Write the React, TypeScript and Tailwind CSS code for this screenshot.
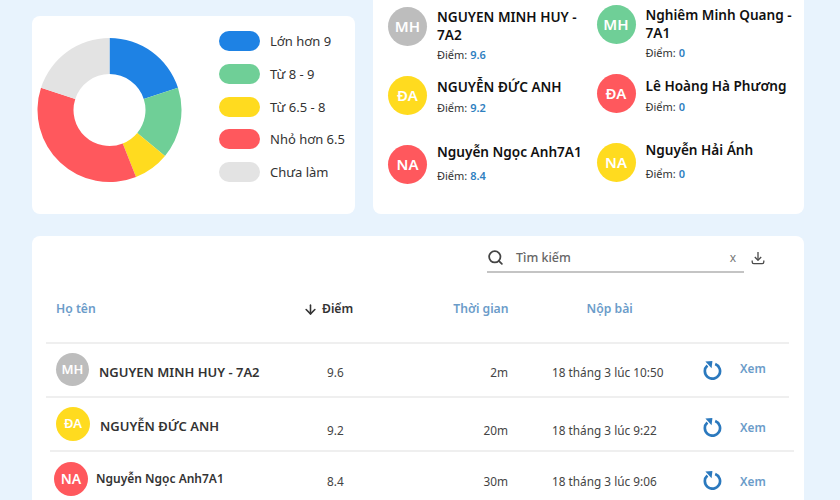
import React from 'react';
import { Search, ArrowDown } from 'lucide-react';

const BLUE = '#1e82e4';
const GREEN = '#6fcf97';
const YELLOW = '#ffdb1f';
const RED = '#ff585d';
const GRAY = '#e3e3e3';

const slices = [
  { color: BLUE, from: 0, to: 72 },
  { color: GREEN, from: 72, to: 129.6 },
  { color: YELLOW, from: 129.6, to: 158.4 },
  { color: RED, from: 158.4, to: 288 },
  { color: GRAY, from: 288, to: 360 },
];

const legend = [
  { color: 'bg-[#1e82e4]', label: 'Lớn hơn 9' },
  { color: 'bg-[#6fcf97]', label: 'Từ 8 - 9' },
  { color: 'bg-[#ffdb1f]', label: 'Từ 6.5 - 8' },
  { color: 'bg-[#ff585d]', label: 'Nhỏ hơn 6.5' },
  { color: 'bg-[#e3e3e3]', label: 'Chưa làm' },
];

function arcPath(from: number, to: number) {
  const R = 72;
  const r = 36;
  const pt = (rad: number, a: number) => {
    const t = (a * Math.PI) / 180;
    return `${(rad * Math.sin(t)).toFixed(2)} ${(-rad * Math.cos(t)).toFixed(2)}`;
  };
  const large = to - from > 180 ? 1 : 0;
  return `M${pt(R, from)} A${R} ${R} 0 ${large} 1 ${pt(R, to)} L${pt(r, to)} A${r} ${r} 0 ${large} 0 ${pt(r, from)} Z`;
}

const Donut = () => (
  <svg width="146" height="146" viewBox="-73.5 -73 146 146" className="shrink-0">
    {slices.map((s) => (
      <path key={s.color} d={arcPath(s.from, s.to)} fill={s.color} />
    ))}
  </svg>
);

const RefreshIcon = () => (
  <svg width="20" height="20" viewBox="0 0 20 20" fill="none" className="shrink-0">
    <path d="M4.4 5.4 A7.6 7.6 0 1 0 12.2 4" stroke="#2b79be" strokeWidth="2.7" />
    <path d="M2.4 1.4 L9.4 1 L8.6 8.2 Z" fill="#2b79be" />
  </svg>
);

const DownloadIcon = () => (
  <svg width="14" height="14" viewBox="0 0 14 14" fill="none" stroke="#4a4a4a" strokeWidth="1.3" className="shrink-0">
    <path d="M7 1 V9" />
    <path d="M3.8 6 L7 9.2 L10.2 6" strokeLinejoin="round" fill="none" />
    <path d="M1.2 9.5 V11 Q1.2 12.6 2.8 12.6 H11.2 Q12.8 12.6 12.8 11 V9.5" />
  </svg>
);

interface StudentProps {
  initials: string;
  color: string;
  name: React.ReactNode;
  score: string;
  className?: string;
  textClass: string;
  metaClass: string;
}

const Student: React.FC<StudentProps> = ({ initials, color, name, score, className, textClass, metaClass }) => (
  <div className={`flex gap-[10px] ${className ?? ''}`}>
    <div className={`w-[39px] h-[39px] rounded-full shrink-0 flex items-center justify-center text-white font-semibold text-[15px] ${color}`}>
      {initials}
    </div>
    <div className={textClass}>
      <div className="text-[13.6px] leading-[18px] font-semibold text-[#111]">{name}</div>
      <div className={`text-[11px] leading-[15px] text-[#333] ${metaClass}`}>
        Điểm: <span className="font-semibold text-[#2f80c0]">{score}</span>
      </div>
    </div>
  </div>
);

export default function App() {
  return (
    <div className="w-[840px] h-[500px] overflow-hidden bg-[#e8f3fd] font-['Noto_Sans','Open_Sans',sans-serif]">
      <div className="flex items-end gap-[18px] pl-[32px] h-[214px]">
        <div className="w-[323px] h-[198px] bg-white rounded-lg flex">
          <div className="ml-[4px] mt-[21px]">
            <Donut />
          </div>
          <div className="ml-[37px] mt-[15px] flex flex-col gap-[12.75px]">
            {legend.map((l) => (
              <div key={l.label} className="flex items-center gap-[10px] text-[13px] leading-[20px] text-[#333]">
                <span className={`w-[41px] h-[20px] rounded-[10px] ${l.color}`} />
                {l.label}
              </div>
            ))}
          </div>
        </div>
        <div className="w-[431px] h-[214px] bg-white rounded-b-lg flex">
          <div className="w-[209px] pl-[15px] pt-[7px] flex flex-col">
            <Student initials="MH" color="bg-[#bdbdbd]" name="NGUYEN MINH HUY - 7A2" score="9.6" textClass="pt-[1px]" metaClass="mt-[3px]" />
            <Student initials="ĐA" color="bg-[#ffdb1f]" name="NGUYỄN ĐỨC ANH" score="9.2" className="mt-[14px] h-[69px]" textClass="pt-[2px]" metaClass="mt-[4px]" />
            <Student initials="NA" color="bg-[#ff585d]" name="Nguyễn Ngọc Anh7A1" score="8.4" textClass="-mt-[2px]" metaClass="mt-[7px]" />
          </div>
          <div className="flex-1 pl-[14.5px] pt-[5px] pr-[10px] flex flex-col">
            <Student initials="MH" color="bg-[#6fcf97]" name="Nghiêm Minh Quang - 7A1" score="0" className="-mr-[2px]" textClass="pt-[1px]" metaClass="mt-[3px]" />
            <Student initials="ĐA" color="bg-[#ff585d]" name="Lê Hoàng Hà Phương" score="0" className="mt-[14px] h-[69px]" textClass="pt-[3px]" metaClass="mt-[4px]" />
            <Student initials="NA" color="bg-[#ffdb1f]" name="Nguyễn Hải Ánh" score="0" textClass="-mt-[2px]" metaClass="mt-[7px]" />
          </div>
        </div>
      </div>

      <div className="ml-[32px] mt-[22px] w-[772px] h-[300px] bg-white rounded-t-lg">
        <div className="flex items-center pt-[8px] pl-[455px]">
          <div className="w-[257px] h-[29px] border-b-2 border-[#c4c4c4] flex items-center">
            <Search size={17} color="#444" strokeWidth={2.5} className="shrink-0" />
            <span className="ml-[12px] mt-[1px] text-[12.5px] font-medium text-[#666]">Tìm kiếm</span>
            <span className="ml-auto mr-[8px] text-[12px] text-[#777]">x</span>
          </div>
          <div className="ml-[7px] -mt-[1px]">
            <DownloadIcon />
          </div>
        </div>

        <div className="flex items-center h-[35px] mt-[19px] text-[12.2px] font-semibold text-[#6b9cc9]">
          <span className="ml-[24px] w-[247px]">Họ tên</span>
          <span className="flex items-center text-[#333]">
            <ArrowDown size={15} color="#333" strokeWidth={2.5} />
            <span className="ml-[4px]">Điểm</span>
          </span>
          <span className="ml-[100px]">Thời gian</span>
          <span className="ml-[78px]">Nộp bài</span>
        </div>

        <div className="mt-[15px] ml-[14px] w-[743px] border-t-2 border-[#efefef] h-[54px] flex items-center text-[11.8px] text-[#444]">
          <div className="w-[33px] h-[33px] ml-[10px] rounded-full bg-[#bdbdbd] shrink-0 flex items-center justify-center text-white font-semibold text-[13px] -mt-[1px]">MH</div>
          <span className="ml-[10px] w-[228px] text-[13px] font-semibold text-[#333] mt-[6px]">NGUYEN MINH HUY - 7A2</span>
          <span className="w-[40px] mt-[6px]">9.6</span>
          <span className="w-[141px] text-right mt-[6px]">2m</span>
          <span className="ml-[44px] w-[151px] mt-[6px]">18 tháng 3 lúc 10:50</span>
          <RefreshIcon />
          <span className="ml-[17px] font-semibold text-[#6b9cc9] -mt-[2px]">Xem</span>
        </div>
        <div className="ml-[14px] w-[743px] border-t-2 border-[#efefef] h-[54px] flex items-center text-[11.8px] text-[#444]">
          <div className="w-[34px] h-[34px] ml-[10px] rounded-full bg-[#ffdb1f] shrink-0 flex items-center justify-center text-white font-semibold text-[13px] -mt-[1px]">ĐA</div>
          <span className="ml-[10px] w-[227px] text-[13px] font-semibold text-[#333] mt-[6px]">NGUYỄN ĐỨC ANH</span>
          <span className="w-[40px] mt-[14px]">9.2</span>
          <span className="w-[141px] text-right mt-[14px]">20m</span>
          <span className="ml-[44px] w-[151px] mt-[14px]">18 tháng 3 lúc 9:22</span>
          <div className="mt-[6px]">
            <RefreshIcon />
          </div>
          <span className="ml-[17px] font-semibold text-[#6b9cc9] mt-[8px]">Xem</span>
        </div>
        <div className="ml-[18px] w-[744px] border-t-2 border-[#efefef] h-[54px] flex items-center text-[11.8px] text-[#444]">
          <div className="w-[34px] h-[34px] ml-[4px] rounded-full bg-[#ff585d] shrink-0 flex items-center justify-center text-white font-semibold text-[14px] mt-[1px]">NA</div>
          <span className="ml-[8px] w-[231px] text-[12px] font-semibold text-[#333] mt-[1px]">Nguyễn Ngọc Anh7A1</span>
          <span className="w-[40px] mt-[8px]">8.4</span>
          <span className="w-[141px] text-right mt-[8px]">30m</span>
          <span className="ml-[44px] w-[151px] mt-[8px]">18 tháng 3 lúc 9:06</span>
          <div className="mt-[4px]">
            <RefreshIcon />
          </div>
          <span className="ml-[17px] font-semibold text-[#6b9cc9] mt-[8px]">Xem</span>
        </div>
      </div>
    </div>
  );
}
